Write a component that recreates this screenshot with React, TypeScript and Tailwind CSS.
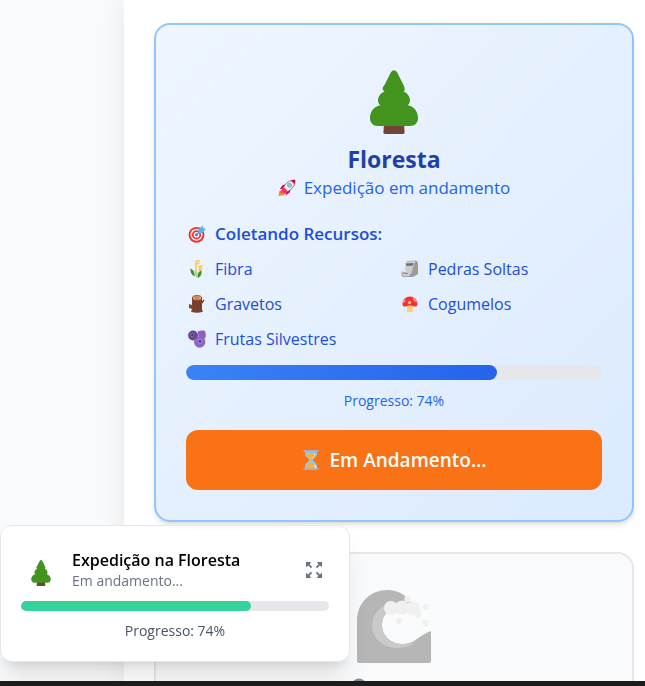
import React from "react";

type IconProps = { className?: string };

const TREE_GREEN = "#43931f";

function Tree({ className }: IconProps) {
  return (
    <svg viewBox="0 0 48 64" className={className} aria-hidden="true">
      <path d="M14 54h20l.6 8.200q.1 1.800-1.700 1.800H15.100q-1.800 0-1.700-1.800z" fill="#714536" />
      <path d="M21 2Q24-1.500 27 2L33.500 15Q36 20 33.500 21.500C37.500 23 40 27 40 30.500C40 32.500 39 34.500 37.500 35.300C44 36 48 42 48 48C48 52.500 45 56 40 56H8C3 56 0 52.500 0 48C0 42 4 36 10.500 35.300C9 34.500 8 32.500 8 30.500C8 27 10.500 23 14.500 21.500C12 20 12 18 14.500 15Z" fill={TREE_GREEN} />
    </svg>
  );
}

function Rocket({ className }: IconProps) {
  return (
    <svg viewBox="0 0 20 20" className={className} aria-hidden="true">
      <path d="M3.500 12L1.500 13.500L.5 19L6 18L8 16z" fill="#ff822d" />
      <path d="M8.500 6L5 7L2 11.500L5 11zM14 11.500L13 15L8.500 18L9 15z" fill="#ca0b4a" />
      <path d="M18.800 1.200c.5 5-2 9.800-9.800 13.800l-4-4C9 3.500 14 .8 18.800 1.200z" fill="#f4f4f4" stroke="#ca0b4a" strokeWidth=".8" />
      <path d="M14 1.700c1.700-.6 3.200-.7 4.800-.5.200 1.600.1 3.100-.5 4.700z" fill="#ca0b4a" />
      <path d="M6.500 9L11 14L8.500 15.500L8 17L5.500 15L3 15.500L4.500 12z" fill="#f92f60" />
      <circle cx="12.800" cy="7" r="2.200" fill="#83cbff" stroke="#7d8b99" strokeWidth=".8" />
    </svg>
  );
}

function Target({ className }: IconProps) {
  return (
    <svg viewBox="0 0 18 18" className={className} aria-hidden="true">
      <circle cx="8.500" cy="9.800" r="7.900" fill="#f8312f" />
      <circle cx="8.500" cy="9.800" r="6" fill="#fff" />
      <circle cx="8.500" cy="9.800" r="4.600" fill="#f8312f" />
      <circle cx="8.500" cy="9.800" r="2.800" fill="#fff" />
      <circle cx="8.500" cy="9.800" r="1.500" fill="#f8312f" />
      <path d="M8.500 10l6-6" stroke="#46a4fb" strokeWidth="1.400" />
      <path d="M10.500 4.500L14.500 .5l.8 2.700 2.700.8-4 4-3.500.3z" fill="#4cb9ec" />
    </svg>
  );
}

function Grain({ className }: IconProps) {
  return (
    <svg viewBox="0 0 18 18" className={className} aria-hidden="true">
      <path d="M8 16V1.500M12 16V6.500" stroke="#edb03c" strokeWidth="1" />
      <path d="M7.500.5L12.500 0L11.500 1.500L8 2.200zM7.500 3.200L12 2.600L11 4.300L8 5zM10 6L15 5.200L14 7.200L11 8zM10 9.200L14.500 8.500L13.500 10.500L11 11z" fill="#ffc53d" />
      <path d="M2.500 8.500C6 10 7 13 6.500 16.500C3.500 15 2 12 2.500 8.500zM13.500 10.500C14.200 14 12.500 16.500 10 18C8.500 14.500 10.500 12 13.500 10.500z" fill="#44911b" />
      <path d="M7.500 9.500C9.800 12 10 15 9 18C6.500 16 6 12.500 7.500 9.500z" fill="#a5d99a" />
    </svg>
  );
}

function Log({ className }: IconProps) {
  return (
    <svg viewBox="0 0 18 18" className={className} aria-hidden="true">
      <path d="M4 3h10v11.500l1 2.200c-4 1.300-8 1.300-12 0l1-2.700-3-1V9l3 1zM14 6l1.500-1.500 1 1L14 9z" fill="#7d4533" />
      <path d="M6 6v10M9 6v11M12 6v10" stroke="#623323" strokeWidth=".8" />
      <ellipse cx="9" cy="3" rx="4.700" ry="2.300" fill="#f3ad61" stroke="#7d4533" />
      <ellipse cx="9" cy="3" rx="2.300" ry=".8" fill="none" stroke="#aa6235" strokeWidth=".6" />
    </svg>
  );
}

function Berries({ className }: IconProps) {
  return (
    <svg viewBox="0 0 18 18" className={className} aria-hidden="true">
      <path d="M9.500 1.500Q13 0 17 .8Q18.500 5 17 8.500L11 9z" fill="#8c5fc4" />
      <circle cx="5" cy="5.500" r="4.900" fill="#6b438b" />
      <circle cx="11.700" cy="12" r="5.700" fill="#8d65c5" />
      <circle cx="4.300" cy="5" r="1.800" fill="#433b6b" stroke="#a67ad4" strokeWidth=".7" />
      <circle cx="12" cy="11.300" r="1.900" fill="#433b6b" stroke="#b798dc" strokeWidth="1" />
    </svg>
  );
}

function Stone({ className }: IconProps) {
  return (
    <svg viewBox="0 0 18 18" className={className} aria-hidden="true">
      <path d="M6 1L15 .5L17 2.500V14L12 17H2L.5 15V12L4 9z" fill="#9b9b9b" />
      <path d="M5 1.500L14.500 1L12.500 6L10.500 13L7.500 16.500L2 16L1 12.500L4.500 10z" fill="#cdcdcd" />
      <path d="M4.500 3.500l8-.5-.5 2.500-6.500.5z" fill="#707070" />
      <path d="M2 13l5 .5" stroke="#747474" strokeWidth=".9" />
      <path d="M4.500 6L1 12h4z" fill="#e6e6e6" />
    </svg>
  );
}

function Mushroom({ className }: IconProps) {
  return (
    <svg viewBox="0 0 18 18" className={className} aria-hidden="true">
      <path d="M6.500 10h5l.7 5.500c.3 2-6.700 2-6.400 0z" fill="#ffce7c" />
      <path d="M1.500 9C1.500 4.500 5 1.500 9 1.500S16.500 4.500 16.500 9c0 2.500-2 3-4 2.200-2.200-.8-4.800-.8-7 0-2 .8-4 .3-4-2.200z" fill="#f8312f" />
      <circle cx="8.500" cy="7.500" r="1.700" fill="#ffb3ac" />
      <path d="M11.500 2.500c2.500.8 4 2.800 4.500 5-2.500-.7-4-2.500-4.500-5zM2.200 6l2-2 .3 2.500-2 1.500z" fill="#ff9a92" />
    </svg>
  );
}

function Hourglass({ className }: IconProps) {
  return (
    <svg viewBox="0 0 16 20" className={className} aria-hidden="true">
      <path d="M2 1h12v3c0 3-4 4-4 6s4 3 4 6v3H2v-3c0-3 4-4 4-6S2 7 2 4z" fill="#83cbff" />
      <path d="M3.500 4h9C12 7 9 8 9 10v3c2 1 3.500 2.500 3.500 5h-9C3.500 15.500 5 14 7.500 13v-3C7.500 8 4 7 3.500 4z" fill="#ffb02e" />
      <path d="M11.500 4c0 2-2 3-2.500 4M11.500 15l1.500 3" stroke="#fff" strokeWidth="1" />
      <path d="M.5 1h15M.5 19h15" stroke="#b4acbc" strokeWidth="1.800" />
    </svg>
  );
}

function Wave({ className }: IconProps) {
  return (
    <svg viewBox="0 0 75 73" className={className} aria-hidden="true">
      <path d="M0 31C0 13 13 0 31 0C41 0 49 5 54 12L42 18C30 18 25 27 25 35C25 46 34 54 46 54C58 54 62 45 74 41V71Q74 73 72 73H2Q0 73 0 71Z" fill="#b6b6b6" />
      <path d="M35 13C24 15 15 24 15 35C15 48 26 58 40 58C48 58 55 55 59 52C54 54 50 54 46 54C34 54 25 46 25 35C25 28 28 22 36 18Z" fill="#cacaca" />
      <g fill="#f0f0f0">
        <circle cx="34" cy="18" r="7" />
        <circle cx="45" cy="17.500" r="7" />
        <circle cx="56" cy="18" r="7" />
        <circle cx="60" cy="22" r="3.500" />
        <circle cx="61" cy="25" r="3" />
        <circle cx="50.500" cy="9" r="3.200" />
        <circle cx="42" cy="31" r="3.100" />
        <circle cx="68.500" cy="17" r="3.100" />
        <circle cx="68.500" cy="33" r="3.100" />
      </g>
    </svg>
  );
}

function Lock({ className }: IconProps) {
  return (
    <svg viewBox="0 0 24 24" className={className} aria-hidden="true">
      <path d="M6 12V8c0-8 12-8 12 0v4" fill="none" stroke="#858e99" strokeWidth="3" />
      <rect x="3" y="10" width="18" height="13" rx="2" fill="#a3a3a3" />
    </svg>
  );
}

function Expand({ className }: IconProps) {
  return (
    <svg viewBox="0 0 16 16" className={className} aria-hidden="true">
      <path d="M0 0h5.200L3.600 2.200 6.200 4.900 4.900 6.200 2.200 3.600 0 5.200zM16 0v5.200l-2.200-1.600-2.700 2.600-1.300-1.300 2.600-2.700L10.800 0zM0 16v-5.200l2.200 1.600 2.700-2.600 1.300 1.300-2.600 2.700L5.200 16zM16 16h-5.200l1.600-2.200-2.600-2.700 1.300-1.300 2.700 2.600 2.200-1.600z" fill="currentColor" />
    </svg>
  );
}

const resources = [
  { name: "Fibra", Icon: Grain },
  { name: "Pedras Soltas", Icon: Stone },
  { name: "Gravetos", Icon: Log },
  { name: "Cogumelos", Icon: Mushroom },
  { name: "Frutas Silvestres", Icon: Berries },
];

const progress = 74.8;

function Meter({ track, fill }: { track: string; fill: string }) {
  return (
    <div
      role="progressbar"
      aria-label="Progresso"
      aria-valuenow={Math.floor(progress)}
      className={`overflow-hidden rounded-full bg-gray-200 ${track}`}
    >
      <div className={`h-full rounded-full ${fill}`} style={{ width: `${progress}%` }} />
    </div>
  );
}

function ForestCard() {
  return (
    <article className="rounded-2xl border-2 border-[#93c5fd] bg-linear-135 from-[#eff6ff] to-[#dbeafe] p-[30px] text-[#1d4ed8] shadow-md">
      <header className="flex flex-col items-center">
        <div className="flex h-[90px] items-center pt-1">
          <Tree className="h-16 w-12" />
        </div>
        <h2 className="text-[23px] leading-7 font-bold text-[#1e40af]">Floresta</h2>
        <p className="flex h-[30px] items-center gap-2 text-[17px] text-[#2563eb]">
          <Rocket className="size-[18px]" />
          Expedição em andamento
        </p>
      </header>

      <section className="mt-[18px]">
        <h3 className="flex h-[25px] items-center gap-[9px] pl-0.5 text-[17px] font-semibold">
          <Target className="size-[18px]" />
          Coletando Recursos:
        </h3>
        <ul className="mt-2.5 grid grid-cols-2 gap-2.5 text-base">
          {resources.map(({ name, Icon }) => (
            <li key={name} className="flex h-[25px] items-center gap-[9px] pl-0.5">
              <Icon className="size-[18px]" />
              {name}
            </li>
          ))}
        </ul>
      </section>

      <Meter track="mt-3.5 h-[15px]" fill="bg-linear-to-r from-[#3b82f6] to-[#2563eb]" />
      <p className="mt-2.5 text-center text-sm leading-[22px] text-[#2563eb]">Progresso: 74%</p>
      <button
        type="button"
        className="mt-[18px] flex h-[60px] w-full items-center justify-center gap-2 rounded-xl bg-[#f97316] text-[19px] font-semibold text-white"
      >
        <Hourglass className="h-5 w-5" />
        Em Andamento...
      </button>
    </article>
  );
}

function BeachCard() {
  return (
    <article className="mt-[30px] rounded-2xl border-2 border-gray-200 bg-[#f9fafb] p-[30px]">
      <div className="flex h-[90px] items-start justify-center pt-1.5">
        <Wave className="h-[73px] w-[75px]" />
      </div>
      <div className="flex justify-center pt-1 pr-[70px]">
        <Lock className="size-6" />
      </div>
    </article>
  );
}

function ExpeditionToast() {
  return (
    <aside className="fixed bottom-6 left-0 w-[350px] rounded-xl border border-gray-200 bg-white p-5 shadow-xl">
      <div className="flex h-[55px] items-center pb-2">
        <div className="flex w-10 justify-center pt-1.5">
          <Tree className="h-[26px] w-5" />
        </div>
        <div className="ml-[11px] flex-1">
          <h4 className="text-base leading-[22px] font-semibold text-black">Expedição na Floresta</h4>
          <p className="text-sm leading-5 text-gray-500">Em andamento...</p>
        </div>
        <button type="button" aria-label="Expandir" className="mr-[7px] text-gray-500">
          <Expand className="size-4" />
        </button>
      </div>
      <Meter track="h-2.5" fill="bg-[#34d399]" />
      <p className="mt-2.5 text-center text-sm leading-5 text-gray-600">Progresso: 74%</p>
    </aside>
  );
}

export default function App() {
  return (
    <div className="flex h-screen overflow-hidden bg-[#f9fafb] font-['Open_Sans','Noto_Sans',sans-serif]">
      <div className="w-31 shrink-0" />
      <main className="min-w-0 flex-1 bg-white pt-[23px] pr-[11px] pl-[30px] shadow-[0_0_25px_rgba(0,0,0,0.08)]">
        <ForestCard />
        <BeachCard />
      </main>
      <ExpeditionToast />
      <footer className="fixed inset-x-0 bottom-0 h-[5px] bg-[#1c1c1c]" />
    </div>
  );
}
